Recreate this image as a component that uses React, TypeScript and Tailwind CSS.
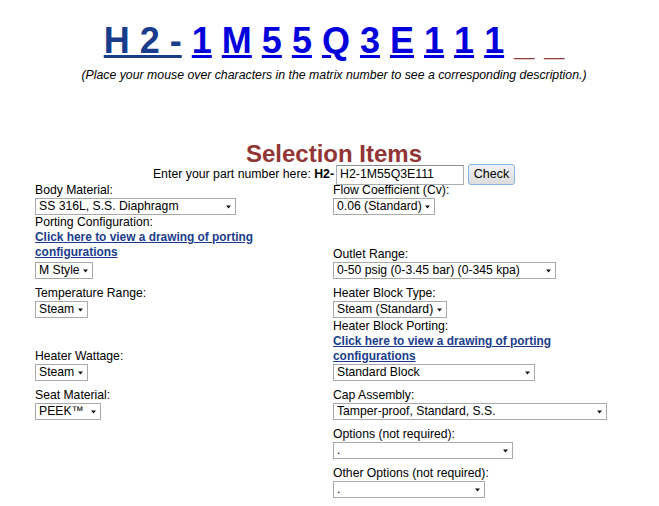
import React from "react";

type Option = {
  label: string;
  value: string;
  width: string;
};

const matrixChars = ["1", "M", "5", "5", "Q", "3", "E", "1", "1", "1"];

function Arrow() {
  return (
    <svg width="5" height="4" viewBox="0 0 5 4" className="ml-[3px] shrink-0">
      <path d="M0 0.5 L5 0.5 L2.5 3.5 Z" fill="#111" />
    </svg>
  );
}

function FakeSelect({ value, width, className = "" }: { value: string; width: string; className?: string }) {
  return (
    <div
      className={`flex h-[17px] items-center justify-between border border-[#a9a9a9] bg-white pl-[3px] pr-[4px] text-[12.2px] leading-[15px] text-black ${width} ${className}`}
    >
      <span className="shrink-0 whitespace-nowrap">{value}</span>
      <Arrow />
    </div>
  );
}

function Field({ label, value, width }: Option) {
  return (
    <div>
      <p className="text-[12.2px] leading-[15px] text-black">{label}</p>
      <FakeSelect value={value} width={width} />
    </div>
  );
}

function PortingLink() {
  return (
    <a href="#" className="block w-[240px] text-[11.9px] font-bold leading-[15px] text-[#1a3c8c] underline">
      Click here to view a drawing of porting configurations
    </a>
  );
}

export default function App() {
  return (
    <div className="min-h-screen bg-white font-['Liberation_Sans',Arial,sans-serif] text-black">
      <div className="ml-[35px] w-[598px] pt-[20px]">
        <div className="text-center text-[36px] font-bold leading-[41px]">
          <a href="#" className="text-[#1a3c8c] underline">
            H 2 -
          </a>
          {matrixChars.map((ch, i) => (
            <React.Fragment key={i}>
              {" "}
              <a href="#" className="text-[#0000dd] underline">
                {ch}
              </a>
            </React.Fragment>
          ))}{" "}
          <span className="relative top-[2px] text-[#8f3a3a]">_</span>{" "}
          <span className="relative top-[2px] text-[#8f3a3a]">_</span>
        </div>
        <p className="mt-[7px] text-center text-[12.3px] italic leading-[14px]">
          (Place your mouse over characters in the matrix number to see a corresponding description.)
        </p>

        <h2 className="mt-[60px] text-center text-[24px] font-bold leading-[24px] text-[#923535]">
          Selection Items
        </h2>
        <div className="-mt-[2px] flex items-center justify-center text-[12.3px] leading-[15px]">
          <span>
            Enter your part number here: <b>H2-</b>
          </span>
          <div className="ml-[2px] flex h-[20px] w-[128px] items-center border border-[#abadb3] border-t-[#8e8f8f] bg-white pl-[3px]">
            H2-1M55Q3E111
          </div>
          <button
            type="button"
            className="ml-[4px] h-[21px] w-[47px] rounded-[3px] border border-[#7eb4ea] bg-gradient-to-b from-[#f2f2f2] to-[#dcdcdc] text-[12.5px] leading-[15px] text-black"
          >
            Check
          </button>
        </div>

        <div className="-mt-[2px] grid grid-cols-[298px_300px] items-end">
          <Field label="Body Material:" value="SS 316L, S.S. Diaphragm" width="w-[201px]" />
          <Field label="Flow Coefficient (Cv):" value="0.06 (Standard)" width="w-[102px]" />
        </div>

        <div className="grid grid-cols-[298px_300px] items-end">
          <div>
            <p className="text-[12.2px] leading-[15px]">Porting Configuration:</p>
            <PortingLink />
            <FakeSelect value="M Style" width="w-[58px]" className="mt-[2px]" />
          </div>
          <Field label="Outlet Range:" value="0-50 psig (0-3.45 bar) (0-345 kpa)" width="w-[223px]" />
        </div>

        <div className="mt-[7px] grid grid-cols-[298px_300px] items-end">
          <Field label="Temperature Range:" value="Steam" width="w-[53px]" />
          <Field label="Heater Block Type:" value="Steam (Standard)" width="w-[114px]" />
        </div>

        <div className="mt-[1px] grid grid-cols-[298px_300px] items-end">
          <Field label="Heater Wattage:" value="Steam" width="w-[53px]" />
          <div>
            <p className="text-[12.2px] leading-[15px]">Heater Block Porting:</p>
            <PortingLink />
            <FakeSelect value="Standard Block" width="w-[202px]" />
          </div>
        </div>

        <div className="mt-[7px] grid grid-cols-[298px_300px] items-end">
          <Field label="Seat Material:" value="PEEK™" width="w-[66px]" />
          <Field label="Cap Assembly:" value="Tamper-proof, Standard, S.S." width="w-[274px]" />
        </div>

        <div className="mt-[7px] grid grid-cols-[298px_300px] items-end">
          <div />
          <Field label="Options (not required):" value="." width="w-[180px]" />
        </div>

        <div className="mt-[7px] grid grid-cols-[298px_300px] items-end">
          <div />
          <Field label="Other Options (not required):" value="." width="w-[152px]" />
        </div>
      </div>
    </div>
  );
}
